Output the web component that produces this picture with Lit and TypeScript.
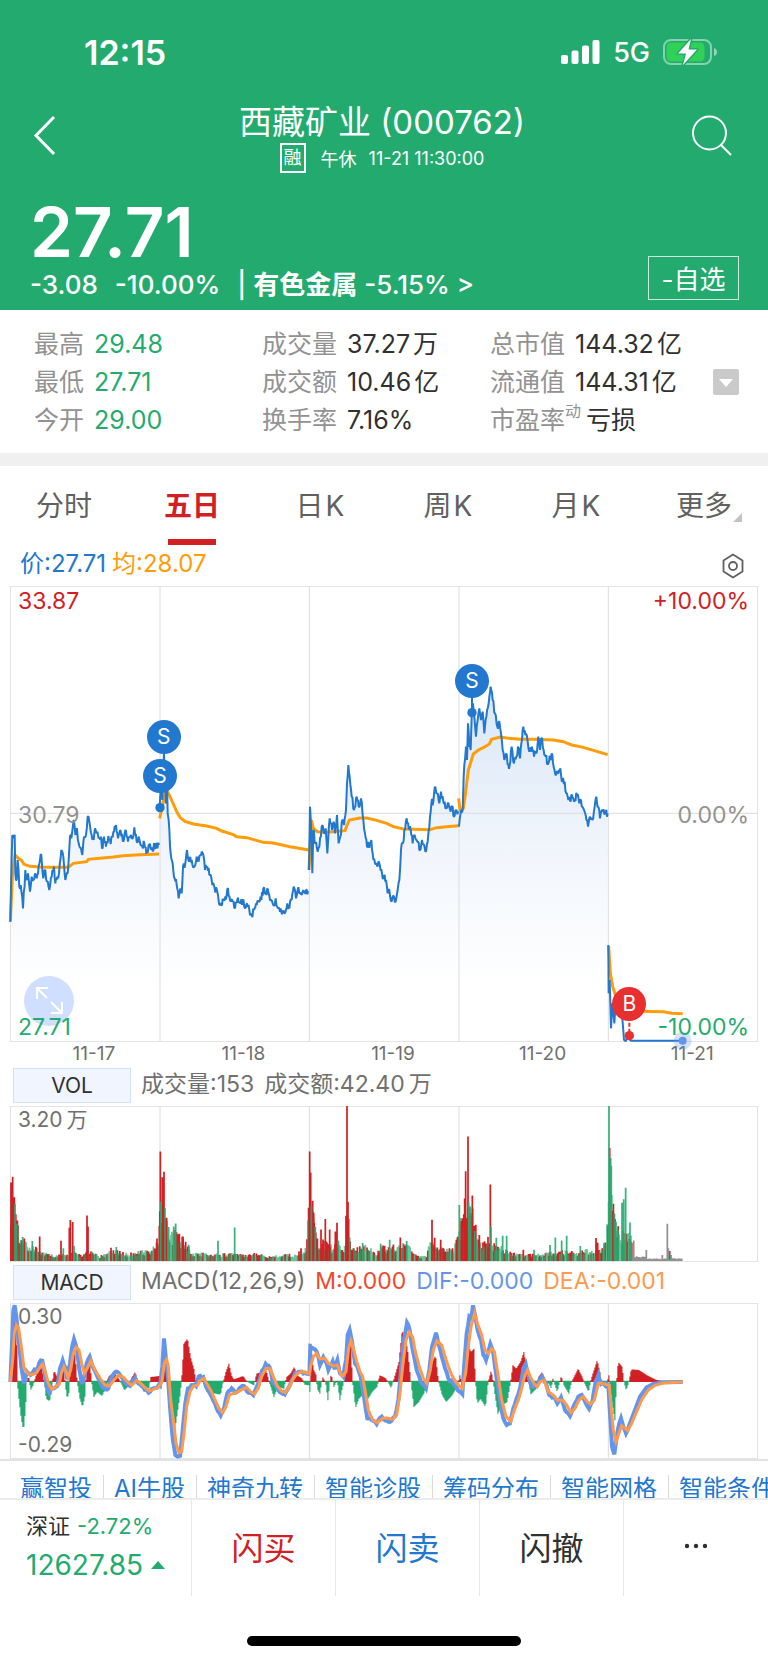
import { LitElement, html, svg, css } from "lit";
import { customElement, state } from "lit/decorators.js";
import { classMap } from "lit/directives/class-map.js";
import { styleMap } from "lit/directives/style-map.js";

type Point = [number, number];

const pts = (text: string): Point[] =>
  text.trim().split(/\s+/).map((p) => p.split(",").map(Number) as Point);

const seeded = (seed: number) => () => {
  seed = (seed * 1664525 + 1013904223) % 4294967296;
  return seed / 4294967296;
};

/** Adds tick-level movement between the key points of a series. */
const ticks = (line: Point[], step: number, amp: number, seed: number): Point[] => {
  const rnd = seeded(seed);
  const out: Point[] = [];
  for (let i = 0; i < line.length - 1; i++) {
    const [x0, y0] = line[i];
    const [x1, y1] = line[i + 1];
    out.push([x0, y0]);
    const n = Math.floor((x1 - x0) / step);
    if (n > 20) continue;
    for (let k = 1; k < n; k++) {
      const t = k / n;
      out.push([x0 + (x1 - x0) * t, y0 + (y1 - y0) * t + (rnd() - 0.5) * 2 * amp]);
    }
  }
  out.push(line[line.length - 1]);
  return out;
};

const at = (line: Point[], x: number): number => {
  for (let i = 1; i < line.length; i++) {
    const [x0, y0] = line[i - 1];
    const [x1, y1] = line[i];
    if (x <= x1) return y0 + ((y1 - y0) * (x - x0)) / (x1 - x0 || 1);
  }
  return line[line.length - 1][1];
};

const path = (line: Point[]) =>
  "M" + line.map(([x, y]) => `${x.toFixed(1)} ${y.toFixed(1)}`).join("L");

const PRICE = [
  "31,1025 35,830 37,765 44,765 46,880 50,900 53,840 58,920 62,915 69,985 76,870 80,900 84,880 90,935 95,890 100,900 105,880 110,895 120,840 124,825 130,895 136,870 141,905 148,930 155,890 162,860 166,910 172,890 177,880 184,810 190,830 196,900 203,880 210,770 216,760 221,720 226,765 231,745 236,790 247,825 253,770 258,765 263,710 268,725 275,765 281,780 285,745 292,755 296,775 303,770 306,805 312,770 318,800 325,768 332,792 340,755 348,735 354,775 362,752 370,785 376,750 384,785 393,765 398,775 403,742 410,785 418,778 427,800 433,790 441,815 448,795 456,802 464,800 470,793 477,795",
  "479,680 483,620 487,660 490,560 492,520 495,600 498,670 501,600 503,700 506,720 512,820 518,850 524,895 530,915 536,955 541,925 545,940 549,860 556,850 561,810 567,845 575,840 583,860 590,830 596,845 603,825 610,825 615,870 622,860 630,885 637,915 644,925 652,935 657,970 664,975 672,960 680,945 684,925 690,960 698,965 705,985 712,960 720,970 728,960 735,985 741,970 748,990 755,1005 762,990 770,975 777,965 784,960 790,925 797,935 804,930 812,960 820,975 827,955 834,985 842,985 848,995 855,1000 862,970 868,985 875,960 881,920 888,955 893,930 900,940 908,935 916,942 926,935",
  "927,870 930,680 934,760 937,880 940,750 946,790 953,815 958,800 965,740 971,755 977,745 982,820 989,715 996,750 1001,725 1005,760 1011,705 1016,790 1021,770 1027,720 1032,735 1038,690 1041,610 1045,555 1049,590 1055,650 1062,690 1070,650 1076,680 1083,655 1090,720 1095,760 1101,800 1110,790 1114,780 1118,820 1125,850 1132,860 1138,850 1146,880 1152,890 1158,900 1163,940 1168,930 1175,965 1182,950 1187,965 1193,930 1198,900 1203,810 1209,790 1213,750 1220,715 1226,745 1232,750 1238,790 1244,765 1252,785 1260,810 1266,780 1276,815 1283,785 1288,740 1294,670 1300,665 1306,620 1312,640 1318,670 1323,635 1330,665 1338,685 1343,670 1352,695 1358,680 1362,710 1368,690 1376,700",
  "1377,740 1382,700 1388,690 1391,590 1395,540 1398,500 1401,540 1404,430 1408,500 1412,510 1415,410 1419,370 1423,410 1428,470 1433,420 1438,385 1443,420 1448,395 1453,460 1459,410 1466,370 1472,320 1478,360 1485,400 1492,440 1498,425 1503,460 1508,510 1513,540 1518,520 1523,555 1529,555 1535,500 1542,550 1549,530 1554,500 1560,535 1566,480 1570,440 1576,465 1583,485 1588,515 1596,500 1602,530 1609,520 1615,470 1620,510 1624,475 1631,510 1637,530 1645,550 1655,520 1661,560 1669,580 1675,580 1681,565 1687,605 1694,605 1699,640 1705,660 1712,665 1716,645 1722,665 1731,645 1738,670 1743,660 1750,685 1757,705 1764,740 1770,710 1777,720 1784,680 1789,650 1795,680 1800,715 1808,695 1815,700 1823,700",
  "1825,1095 1826,1240 1829,1200 1833,1345 1837,1270 1843,1330 1848,1250 1855,1240 1862,1240 1866,1300 1872,1380 1877,1384 1882,1372 1893,1382 2048,1382",
].map((d, i) => ticks(pts(d), 2, i === 4 ? 2 : 12, 7 + i));

const AVERAGE = [
  "31,1025 38,870 45,825 55,835 65,842 72,853 90,859 120,861 150,862 205,862 220,850 260,845 265,838 300,835 340,831 370,827 420,824 477,822",
  "479,715 487,680 495,640 503,635 510,650 520,672 530,695 540,712 555,724 580,732 620,738 650,745 665,753 700,764 710,770 740,773 790,787 820,789 870,800 926,810",
  "927,870 934,720 940,745 952,755 980,757 1035,752 1040,738 1048,720 1080,714 1100,714 1130,721 1160,730 1180,740 1210,747 1240,748 1290,749 1310,743 1340,740 1376,737",
  "1376,655 1380,690 1390,685 1395,650 1400,610 1405,570 1413,545 1420,522 1435,510 1450,503 1468,492 1475,478 1500,471 1520,474 1560,478 1600,478 1660,480 1690,485 1715,495 1750,502 1823,524",
  "1826,1098 1831,1180 1838,1220 1848,1250 1880,1280 1920,1294 1990,1295 2015,1300 2048,1301",
].map(pts);

const VOLUME_BASE = pts(
  "31,200 45,150 55,100 62,62 75,66 85,48 110,38 130,25 160,18 205,20 230,30 250,16 265,34 300,16 320,20 340,38 370,25 400,25 440,32 465,45 478,60 480,180 500,120 520,88 545,72 560,50 575,27 610,24 640,22 700,22 730,20 780,25 800,12 850,20 880,20 920,38 927,190 940,160 950,62 975,58 990,46 1010,52 1030,36 1047,62 1060,36 1100,48 1130,22 1145,45 1180,45 1220,52 1255,16 1280,16 1290,58 1310,40 1350,36 1370,56 1377,115 1400,160 1415,170 1430,84 1450,56 1480,50 1510,42 1535,26 1570,20 1620,20 1660,28 1700,34 1730,26 1760,34 1800,34 1820,56 1825,280 1835,250 1845,130 1865,92 1890,88 1894,70",
);

/** x, height and colour of the tall bars. */
const VOLUME_PEAKS: [number, number, string][] = [
  [33, 236, "r"], [38, 253, "r"], [43, 192, "r"], [45, 172, "g"], [50, 112, "g"], [53, 108, "r"],
  [68, 72, "g"], [73, 68, "r"], [97, 60, "g"], [119, 74, "r"], [183, 61, "r"], [190, 38, "g"],
  [208, 100, "r"], [211, 123, "r"], [218, 117, "r"], [222, 46, "g"], [261, 137, "r"], [264, 104, "r"],
  [333, 40, "r"], [349, 42, "g"], [471, 68, "r"], [478, 105, "r"], [481, 329, "r"], [482, 178, "g"],
  [487, 252, "r"], [492, 268, "r"], [495, 160, "g"], [500, 130, "r"], [506, 102, "g"], [521, 104, "g"],
  [527, 113, "g"], [538, 82, "r"], [549, 74, "r"], [557, 58, "r"], [566, 49, "g"], [654, 61, "g"],
  [704, 101, "g"], [903, 38, "r"], [929, 329, "r"], [932, 265, "r"], [934, 165, "g"], [938, 181, "r"],
  [941, 145, "r"], [946, 103, "g"], [963, 95, "r"], [976, 126, "r"], [989, 95, "r"], [1006, 89, "r"],
  [1011, 115, "r"], [1015, 62, "g"], [1038, 136, "r"], [1041, 466, "r"], [1044, 178, "r"], [1046, 127, "r"],
  [1049, 71, "g"], [1088, 54, "g"], [1142, 52, "g"], [1169, 64, "g"], [1201, 71, "r"], [1220, 60, "g"],
  [1296, 124, "r"], [1304, 70, "r"], [1322, 64, "r"], [1369, 64, "r"], [1378, 168, "g"], [1384, 120, "r"],
  [1394, 188, "r"], [1397, 270, "r"], [1404, 374, "r"], [1406, 178, "g"], [1411, 164, "g"], [1417, 197, "r"],
  [1424, 90, "g"], [1438, 78, "r"], [1464, 72, "r"], [1471, 230, "r"], [1473, 103, "g"], [1489, 70, "g"],
  [1508, 76, "g"], [1520, 76, "g"], [1570, 34, "r"], [1602, 34, "g"], [1650, 48, "g"], [1666, 71, "g"],
  [1685, 62, "g"], [1700, 76, "g"], [1741, 45, "g"], [1788, 69, "r"], [1793, 55, "r"], [1812, 54, "g"],
  [1827, 466, "g"], [1829, 340, "r"], [1832, 310, "g"], [1834, 286, "g"], [1837, 150, "r"], [1843, 142, "g"],
  [1848, 118, "g"], [1854, 95, "g"], [1866, 175, "g"], [1871, 186, "g"], [1877, 220, "g"], [1880, 82, "r"],
  [1890, 116, "g"], [1893, 58, "g"], [1901, 62, "k"], [1939, 33, "k"], [1987, 18, "k"], [2002, 112, "k"],
  [2005, 38, "k"], [2009, 30, "r"], [2013, 18, "g"],
];

const VOLUME: [number, number, string][] = (() => {
  const rnd = seeded(42);
  const bars: [number, number, string][] = [];
  for (let x = 33; x < 1896; x += 2.4) {
    const rising = x < 62 || (x > 477 && x < 495) || (x > 925 && x < 945) || (x > 1370 && x < 1420);
    const c = rnd() < (rising ? 0.85 : x > 1825 ? 0.3 : 0.52) ? "r" : "g";
    bars.push([x, at(VOLUME_BASE, x) * (0.5 + rnd() * 0.6), c]);
  }
  for (let x = 1898; x < 2048; x += 3) bars.push([x, (x < 1940 ? 10 : 4) + rnd() * 4, "k"]);
  return bars;
})();

const HISTOGRAM = pts(
  "31,0 35,180 44,190 49,110 50,0 55,-50 62,-110 69,-145 75,-80 79,0 84,20 90,-25 98,-10 105,15 115,40 122,50 128,20 131,0 137,-50 147,-58 155,-20 158,25 162,32 170,15 178,20 185,65 190,50 194,-10 200,-50 206,-30 210,60 218,90 224,80 230,0 238,-50 246,-75 254,-40 257,30 268,65 273,0 280,-45 290,-30 305,-42 318,-10 323,15 340,30 355,10 360,0 372,-25 385,-10 392,10 404,30 412,0 430,-12 446,-20 450,15 478,18 485,25 492,125 497,60 500,0 506,-80 514,-180 522,-150 528,-110 540,-30 544,20 550,115 561,130 570,75 580,40 586,5 596,25 608,0 618,-30 660,-38 668,0 676,30 685,55 693,20 700,8 728,18 740,0 760,-10 768,25 785,30 797,35 806,0 820,-45 832,-15 850,-20 858,15 870,25 881,45 890,20 905,10 912,-8 926,-10 929,-40 931,115 938,40 947,20 950,-20 958,-35 966,15 975,0 982,-55 988,0 992,25 1000,-15 1010,5 1018,-55 1025,-20 1030,0 1036,30 1043,120 1050,130 1056,0 1065,-78 1075,-50 1085,-40 1100,-55 1115,-30 1130,-15 1137,20 1155,12 1172,-18 1182,15 1195,60 1205,155 1215,130 1222,90 1231,0 1240,-75 1255,-60 1270,-35 1282,0 1290,50 1305,80 1314,0 1325,-40 1337,-60 1355,-40 1372,-10 1378,20 1386,-10 1390,60 1398,140 1407,100 1412,90 1420,100 1425,0 1430,-65 1440,-50 1455,-75 1463,0 1472,35 1478,0 1485,-50 1492,-95 1505,-70 1520,-60 1530,0 1537,50 1547,40 1560,60 1570,90 1580,35 1585,0 1590,-38 1608,-20 1614,15 1625,30 1635,0 1645,-5 1652,-20 1657,10 1670,-30 1682,18 1690,-10 1705,-35 1713,0 1733,40 1745,15 1755,-10 1764,-30 1772,10 1790,65 1798,30 1803,-5 1820,0 1825,20 1828,-20 1843,-115 1848,0 1853,60 1865,45 1870,0 1877,-25 1885,0 1892,38 1915,36 1940,20 1965,7 1990,2 2048,1",
);

const DIF = pts(
  "31,366 36,250 40,150 44,136 49,170 56,240 64,320 72,370 80,335 92,345 104,328 112,330 118,308 127,302 133,330 140,375 148,398 158,385 172,378 180,325 188,302 196,322 202,358 210,310 216,262 222,238 230,265 238,330 246,372 254,345 260,310 269,290 277,318 290,345 300,365 312,385 325,385 335,350 348,335 360,345 375,368 390,378 405,354 415,370 430,382 446,398 460,385 480,378 487,320 492,235 498,300 503,340 510,440 518,535 526,585 533,590 540,588 548,510 556,430 564,385 575,375 588,378 596,350 610,352 618,380 635,410 650,445 662,466 672,445 682,400 695,385 706,398 722,382 732,378 745,398 760,405 775,370 786,332 797,312 810,325 818,365 835,390 855,402 870,375 885,340 900,335 915,338 928,342 931,260 945,268 955,290 960,315 970,292 980,310 985,330 998,305 1004,328 1012,300 1020,340 1030,350 1038,300 1043,225 1049,210 1056,245 1065,310 1072,320 1082,350 1092,410 1102,475 1115,480 1130,492 1145,470 1160,482 1175,482 1185,470 1195,420 1203,330 1211,240 1221,188 1229,210 1238,270 1250,330 1262,365 1278,384 1288,330 1296,260 1308,218 1318,260 1330,305 1345,355 1365,378 1387,402 1393,310 1400,220 1408,170 1414,175 1419,136 1425,165 1433,210 1443,240 1450,285 1458,300 1465,275 1471,252 1480,280 1490,355 1500,420 1510,475 1520,495 1530,490 1540,445 1550,415 1560,385 1570,325 1577,312 1585,345 1595,380 1610,378 1618,360 1626,350 1638,370 1648,405 1665,415 1672,430 1683,412 1695,450 1710,468 1720,440 1735,410 1745,405 1755,425 1767,446 1777,425 1787,365 1795,345 1803,372 1825,376 1830,460 1836,560 1843,583 1850,530 1858,490 1863,475 1870,500 1878,520 1888,495",
);

const DIF_TAIL = pts("1888,495 1905,450 1920,410 1940,382 1960,372 1990,367 2048,366");

const DEA = pts(
  "31,366 38,300 43,220 49,195 56,205 64,260 72,325 82,340 95,344 108,340 120,322 128,312 136,335 145,370 155,388 165,382 178,372 184,340 192,320 198,335 204,352 212,330 220,280 229,262 237,270 245,310 253,340 262,325 272,302 280,320 290,338 302,358 315,375 328,378 342,360 355,345 370,352 385,368 395,376 410,362 420,368 432,380 447,393 460,388 475,382 486,366 493,310 500,298 505,320 512,420 520,480 528,550 537,578 545,575 553,510 560,440 570,395 580,378 592,376 600,362 612,355 620,370 632,390 645,420 657,445 668,458 678,440 688,405 700,400 715,395 727,388 740,382 752,395 763,402 775,385 785,350 798,325 810,326 820,350 832,378 845,393 856,398 868,380 880,355 893,340 905,335 918,338 928,342 932,320 940,290 950,280 960,297 975,295 985,310 1000,318 1012,315 1022,342 1028,348 1038,335 1046,265 1053,242 1060,265 1070,305 1080,335 1088,350 1095,390 1105,450 1118,480 1132,488 1150,474 1160,474 1178,478 1190,465 1200,400 1208,320 1218,240 1228,216 1238,232 1246,275 1258,320 1270,355 1280,370 1290,335 1300,270 1311,243 1325,255 1340,305 1355,345 1370,370 1387,386 1397,340 1405,260 1413,200 1424,160 1432,190 1445,225 1455,270 1465,280 1475,266 1483,275 1495,350 1505,420 1518,470 1532,484 1545,445 1555,420 1565,385 1575,345 1583,330 1593,355 1605,375 1612,380 1620,366 1632,360 1645,395 1660,405 1672,420 1690,422 1700,435 1713,458 1725,445 1737,420 1750,410 1762,425 1771,432 1783,420 1795,370 1805,370 1828,376 1833,440 1840,510 1848,545 1855,525 1865,497 1875,505 1883,512 1895,490 1910,455 1925,420 1945,390 1965,376 1990,369 2048,366",
);

const histogramBars = (sign: 1 | -1) => {
  let d = "";
  for (let x = 31; x < 2048; x += 3) {
    const v = at(HISTOGRAM, x);
    if (v * sign > 0.5) d += `M${x} 366h3.4V${(366 - v).toFixed(1)}h-3.4z`;
  }
  return d;
};

const volumeBars = (color: string, only: [number, number, string][]) =>
  only.filter((b) => b[2] === color)
    .map(([x, h]) => `M${(x - 2.6).toFixed(1)} 634v${(-h).toFixed(1)}h5.2V634z`)
    .join("");

const DAYS = ["11-17", "11-18", "11-19", "11-20", "11-21"];

const MARKS = [
  { side: "S", x: 491, y: 471 },
  { side: "S", x: 480, y: 588 },
  { side: "S", x: 1416, y: 303 },
  { side: "B", x: 1888, y: 1272 },
];

const STATS = [
  [["最高", "29.48"], ["最低", "27.71"], ["今开", "29.00"]],
  [["成交量", "37.27万"], ["成交额", "10.46亿"], ["换手率", "7.16%"]],
  [["总市值", "144.32亿"], ["流通值", "144.31亿"], ["市盈率", "亏损", "动"]],
];

const TABS = ["分时", "五日", "日K", "周K", "月K", "更多"];
const TOOLS = ["赢智投", "AI牛股", "神奇九转", "智能诊股", "筹码分布", "智能网格", "智能条件单"];

const spaced = (value: string) => {
  const m = /^([\d.]+)([万亿])$/.exec(value);
  return m ? html`${m[1]}<span class="unit">${m[2]}</span>` : value;
};

const shared = css`
  * { box-sizing: border-box; }
  button {
    font: inherit;
    color: inherit;
    background: none;
    border: 0;
    padding: 0;
    margin: 0;
    cursor: pointer;
  }
  a { color: inherit; text-decoration: none; }
  svg { display: block; }
`;

@customElement("quote-header")
class QuoteHeader extends LitElement {
  static styles = [shared, css`
    :host {
      display: block;
      background: #23ab6f;
      color: #fff;
      padding-top: 36px;
    }
    .status {
      display: flex;
      align-items: center;
      justify-content: space-between;
      height: 32px;
      padding: 0 50px 0 84px;
    }
    .clock { font-size: 34px; font-weight: 600; }
    .radio { display: flex; align-items: center; gap: 13px; font-size: 27px; font-weight: 500; }
    .nav {
      display: grid;
      grid-template-columns: 40px 1fr 40px;
      align-items: center;
      margin-top: 34px;
      padding: 0 36px 0 32px;
    }
    .nav button { padding-bottom: 4px; }
    .name {
      margin: 0;
      text-align: center;
      font-size: 33px;
      line-height: 40px;
      font-weight: 400;
      white-space: nowrap;
    }
    .session {
      display: flex;
      align-items: center;
      justify-content: center;
      height: 32px;
      font-size: 18px;
    }
    .margin-flag {
      border: 2px solid #fff;
      font-size: 18px;
      line-height: 26px;
      width: 26px;
      display: flex;
      justify-content: center;
      margin-right: 15px;
    }
    .session time { margin-left: 12px; }
    .quote {
      display: flex;
      justify-content: space-between;
      align-items: flex-end;
      margin-top: 22px;
      padding: 0 29px 8px 30px;
    }
    .price { font-size: 69px; line-height: 72px; font-weight: 600; }
    .change {
      display: flex;
      font-size: 26px;
      line-height: 34px;
      font-weight: 500;
      white-space: nowrap;
    }
    .change .percent { margin: 0 17px; }
    .sector b { font-weight: 700; }
    .watch {
      border: 1px solid #c8ebdb;
      height: 44px;
      width: 91px;
      margin-bottom: 2px;
      padding-bottom: 2px;
      font-size: 26px;
      white-space: nowrap;
    }
  `];

  render() {
    return html`
      <div class="status">
        <span class="clock">12:15</span>
        <span class="radio">
          <svg width="39" height="24" viewBox="0 0 39 24" fill="#fff" aria-hidden="true">
            <rect x="0" y="15" width="7" height="9" rx="2" /><rect x="10.500" y="10.500" width="7" height="13.500" rx="2" />
            <rect x="21" y="5.500" width="7" height="18.500" rx="2" /><rect x="31.500" y="0" width="7" height="24" rx="2" />
          </svg>
          <span>5G</span>
          <svg width="55" height="28" viewBox="0 0 55 28" aria-hidden="true">
            <rect x="1" y="2" width="47" height="24" rx="7" fill="none" stroke="#fff" stroke-opacity=".45" stroke-width="2" />
            <path d="M51 10q3 1 3 4t-3 4z" fill="#fff" fill-opacity=".5" />
            <rect x="3.500" y="4.500" width="38" height="19" rx="4.500" fill="#31d158" />
            <path d="M28 1L15 15.500h8L20 27l14-15.500h-8.500z" fill="#fff" stroke="#23ab6f" stroke-width="3" paint-order="stroke" stroke-linejoin="round" />
          </svg>
        </span>
      </div>
      <div class="nav">
        <button aria-label="返回">
          <svg width="26" height="42" viewBox="0 0 26 42" fill="none" stroke="#fff" stroke-width="3"><path d="M22 2L4 20.500 22 39" /></svg>
        </button>
        <div>
          <h1 class="name">西藏矿业 (000762)</h1>
          <div class="session"><span class="margin-flag">融</span><span>午休</span><time>11-21 11:30:00</time></div>
        </div>
        <button aria-label="搜索">
          <svg width="40" height="42" viewBox="0 0 40 42" fill="none" stroke="#fff" stroke-width="2"><circle cx="17.500" cy="18" r="16.500" /><path d="M29 30L39 40" /></svg>
        </button>
      </div>
      <div class="quote">
        <div>
          <div class="price">27.71</div>
          <div class="change">
            <span>-3.08</span><span class="percent">-10.00%</span>
            <a class="sector" href="#sector">| <b>有色金属</b> -5.15% &gt;</a>
          </div>
        </div>
        <button class="watch">-自选</button>
      </div>
    `;
  }
}

@customElement("quote-stats")
class QuoteStats extends LitElement {
  static styles = [shared, css`
    :host {
      display: grid;
      grid-template-columns: 228fr 228fr 223fr 55fr;
      align-items: center;
      padding: 15px 0 14px 34px;
      border-bottom: 13px solid #f0f0f0;
      font-size: 25px;
      line-height: 38px;
      color: #303030;
    }
    dl { margin: 0; }
    .row { display: flex; gap: 10px; white-space: nowrap; }
    dt { color: #929292; display: flex; }
    dd { margin: 0; }
    .down { color: #23ab6f; }
    .unit { margin-left: 3px; }
    .note { font-size: 16px; line-height: 20px; margin-right: -5px; }
    .more { width: 26px; height: 26px; background: #cacaca; border-radius: 2px; }
  `];

  render() {
    return html`
      ${STATS.map((col, i) => html`
        <dl>${col.map(([label, value, note]) => html`
          <div class="row">
            <dt>${label}${note ? html`<span class="note">${note}</span>` : ""}</dt>
            <dd class=${classMap({ down: i === 0 })}>${spaced(value)}</dd>
          </div>`)}
        </dl>`)}
      <button class="more" aria-label="展开更多">
        <svg width="26" height="26" viewBox="0 0 26 26"><path d="M6 10h14l-7 8z" fill="#fff" /></svg>
      </button>
    `;
  }
}

@customElement("period-tabs")
class PeriodTabs extends LitElement {
  @state() private active = 1;

  static styles = [shared, css`
    :host { display: grid; grid-template-columns: repeat(6, 1fr); }
    .tab {
      position: relative;
      height: 80px;
      font-size: 28px;
      line-height: 80px;
      color: #606060;
    }
    .latin { margin-left: 2px; }
    .active { color: #d12024; font-weight: 700; }
    .active::after {
      content: "";
      position: absolute;
      left: 50%;
      bottom: 1px;
      width: 48px;
      height: 6px;
      margin-left: -24px;
      background: #d12024;
    }
    .corner {
      position: absolute;
      right: 26px;
      bottom: 24px;
      border-left: 9px solid transparent;
      border-bottom: 9px solid #c4c4c4;
    }
  `];

  render() {
    return TABS.map((tab, i) => html`
      <button class=${classMap({ tab: true, active: i === this.active })} @click=${() => (this.active = i)}>
        ${tab.endsWith("K") ? html`${tab[0]}<span class="latin">K</span>` : tab}
        ${i === 5 ? html`<span class="corner"></span>` : ""}
      </button>`);
  }
}

@customElement("quote-charts")
class QuoteCharts extends LitElement {
  static styles = [shared, css`
    :host { display: block; padding: 0 10px; color: #707070; font-size: 23px; }
    .legend {
      display: flex;
      align-items: center;
      gap: 6px;
      height: 40px;
      padding: 0 13px 0 10px;
      font-size: 24px;
      line-height: 32px;
      color: #2277cf;
    }
    .legend span { padding-bottom: 4px; }
    .avg { color: #ff9c08; }
    .legend button { margin-left: auto; }
    .chart { position: relative; border: 1px solid #e4e4e4; }
    .chart svg { width: 100%; height: 100%; overflow: visible; }
    .main { height: 456px; }
    .sub { height: 156px; }
    .grid { stroke: #dcdcdc; stroke-width: 1; }
    .grid, .line { fill: none; vector-effect: non-scaling-stroke; }
    .price-line { stroke: #2277cf; stroke-width: 2; stroke-linejoin: bevel; }
    .avg-line { stroke: #ff9c08; stroke-width: 3; }
    .dif { stroke: #6495ed; stroke-width: 4; }
    .dea { stroke: #ff994d; stroke-width: 3; }
    .label { position: absolute; left: 7px; line-height: 28px; }
    .small { font-size: 21px; line-height: 26px; }
    .end { left: auto; right: 8px; }
    .top { top: 0; }
    .middle { top: 50%; margin-top: -13px; color: #929292; }
    .bottom { bottom: 0; }
    .up { color: #d12024; }
    .down { color: #23ab6f; }
    .mark {
      position: absolute;
      width: 34px;
      height: 34px;
      margin: -17px 0 0 -17px;
      border-radius: 50%;
      background: #2277cf;
      color: #fff;
      font-size: 21px;
      line-height: 34px;
      text-align: center;
    }
    .buy { background: #e83030; }
    .expand {
      position: absolute;
      left: 13px;
      bottom: 15px;
      width: 50px;
      height: 50px;
      border-radius: 50%;
      background: #d0deff;
    }
    .dates {
      display: grid;
      grid-template-columns: repeat(5, 1fr);
      padding-left: 9px;
      margin-right: -9px;
      font-size: 19px;
      line-height: 23px;
      text-align: center;
    }
    .indicator {
      display: flex;
      align-items: center;
      gap: 10px;
      height: 41px;
      padding-left: 3px;
      line-height: 32px;
      white-space: nowrap;
    }
    .indicator > span { padding-bottom: 3px; }
    .indicator button {
      width: 118px;
      height: 35px;
      border: 1px solid #d3e1fb;
      background: #f0f5ff;
      color: #303030;
      font-size: 21px;
    }
    .unit { margin-left: 4px; }
    .m { color: #f04a2c; }
    .dif-text { color: #6495ed; }
    .dea-text { color: #ff994d; }
  `];

  private verticals(top: number, bottom: number) {
    return svg`<path class="grid" d=${[480, 928, 1377, 1825].map((x) => `M${x} ${top}V${bottom}`).join("")} />`;
  }

  render() {
    return html`
      <div class="legend">
        <span>价:27.71</span><span class="avg">均:28.07</span>
        <button aria-label="图表设置">
          <svg width="24" height="26" viewBox="0 0 24 26" fill="none" stroke="#606060" stroke-width="1.800"><path d="M12 1.500L21.500 7.500v11L12 24.500 2.500 18.500v-11z" stroke-linejoin="round" /><circle cx="12" cy="13" r="4" /></svg>
        </button>
      </div>

      <div class="chart main">
        <svg viewBox="33 21 2238 1362" preserveAspectRatio="none" aria-label="五日走势">
          <defs>
            <linearGradient id="fill" gradientUnits="userSpaceOnUse" x1="0" y1="300" x2="0" y2="1385">
              <stop offset="0" stop-color="#2277cf" stop-opacity=".18" />
              <stop offset=".5" stop-color="#2e6fcf" stop-opacity=".06" />
              <stop offset=".85" stop-color="#2277cf" stop-opacity="0" />
            </linearGradient>
          </defs>
          ${PRICE.map((p) => svg`<path fill="url(#fill)" d=${`${path(p)}V1383H${p[0][0]}z`} />`)}
          <path class="grid" d="M33 700H2271" />
          ${this.verticals(21, 1383)}
          ${AVERAGE.map((p) => svg`<path class="line avg-line" d=${path(p)} />`)}
          ${PRICE.map((p) => svg`<path class="line price-line" d=${path(p)} />`)}
          <path class="line price-line" d="M1416 340V398" />
          <path class="line" stroke="#e83030" stroke-width="2" stroke-dasharray="4 2" d="M1888 1310V1367" />
          <circle cx="480" cy="683" r="14" fill="#2277cf" />
          <circle cx="1416" cy="398" r="14" fill="#2277cf" />
          <circle cx="1888" cy="1367" r="14" fill="#e83030" />
          <circle cx="2048" cy="1382" r="27" fill="#6495ed" fill-opacity=".28" />
          <circle cx="2048" cy="1382" r="12" fill="#6495ed" />
        </svg>
        <button class="expand" aria-label="全屏">
          <svg viewBox="0 0 50 50" fill="none" stroke="#fff" stroke-width="2"><path d="M13 23V12H24M13 12L23 22M38 26V37H27M38 37L27 26" /></svg>
        </button>
        <span class="label top up">33.87</span><span class="label top end up">+10.00%</span>
        <span class="label middle">30.79</span><span class="label middle end">0.00%</span>
        <span class="label bottom down">27.71</span><span class="label bottom end down">-10.00%</span>
        ${MARKS.map((m) => html`
          <span class=${classMap({ mark: true, buy: m.side === "B" })}
            style=${styleMap({ left: `${((m.x - 33) / 2238) * 100}%`, top: `${((m.y - 21) / 1362) * 100}%` })}>${m.side}</span>`)}
      </div>
      <div class="dates">${DAYS.map((d) => html`<span>${d}</span>`)}</div>

      <div class="indicator">
        <button>VOL</button><span>成交量:153</span><span>成交额:42.40<span class="unit">万</span></span>
      </div>
      <div class="chart sub">
        <svg viewBox="33 171 2238 463" preserveAspectRatio="none" aria-label="成交量">
          ${this.verticals(171, 634)}
          <path fill="#d12024" d=${volumeBars("r", VOLUME)} />
          <path fill="#23ab6f" fill-opacity=".7" d=${volumeBars("g", VOLUME)} />
          <path fill="#d12024" d=${volumeBars("r", VOLUME_PEAKS)} />
          <path fill="#23ab6f" fill-opacity=".9" d=${volumeBars("g", VOLUME_PEAKS)} />
          <path fill="#909090" d=${volumeBars("k", [...VOLUME, ...VOLUME_PEAKS])} />
        </svg>
        <span class="label small top">3.20<span class="unit">万</span></span>
      </div>

      <div class="indicator">
        <button>MACD</button><span>MACD(12,26,9)</span><span class="m">M:0.000</span><span class="dif-text">DIF:-0.000</span><span class="dea-text">DEA:-0.001</span>
      </div>
      <div class="chart sub">
        <svg viewBox="33 132 2238 462" preserveAspectRatio="none" aria-label="MACD">
          ${this.verticals(132, 594)}
          <path stroke="#23ab6f" stroke-width="4" d="M33 364H2048" />
          <path fill="#d12024" d=${histogramBars(1)} />
          <path fill="#23ab6f" d=${histogramBars(-1)} />
          <path class="line dif" d=${path([...ticks(DIF, 4, 4, 3), ...DIF_TAIL])} />
          <path class="line dea" d=${path(DEA)} />
        </svg>
        <span class="label small top">0.30</span>
        <span class="label small bottom">-0.29</span>
      </div>
    `;
  }
}

@customElement("trade-dock")
class TradeDock extends LitElement {
  static styles = [shared, css`
    :host { display: block; border-top: 2px solid #e2e2e2; }
    .tools {
      display: flex;
      height: 39px;
      padding: 14px 0 0 10px;
      overflow: hidden;
      border-bottom: 2px solid #ececec;
      font-size: 24px;
      line-height: 28px;
      color: #2277cf;
      white-space: nowrap;
    }
    .tools a { flex: none; padding: 0 11px 0 10px; border-right: 1px solid #dadada; }
    .bar { display: grid; grid-template-columns: 192px repeat(4, 1fr); height: 96px; }
    .bar > * { border-right: 1px solid #e8e8e8; }
    .bar > :last-child { border-right: 0; }
    .index { padding: 8px 0 0 26px; color: #23ab6f; white-space: nowrap; }
    .index-top { display: flex; gap: 7px; font-size: 22px; line-height: 36px; }
    .index-name { color: #303030; }
    .index-value { display: flex; align-items: center; gap: 8px; font-size: 28px; line-height: 42px; }
    .trade { font-size: 32px; padding-bottom: 5px; color: #303030; }
    .buy { color: #d12024; }
    .sell { color: #2277cf; }
    .trade svg { margin: auto; }
    .home { width: 274px; height: 10px; border-radius: 5px; background: #000; margin: 40px auto 16px; }
  `];

  render() {
    return html`
      <nav class="tools">${TOOLS.map((t) => html`<a href="#tool">${t}</a>`)}</nav>
      <div class="bar">
        <a class="index" href="#index">
          <span class="index-top"><span class="index-name">深证</span><span>-2.72%</span></span>
          <span class="index-value">12627.85
            <svg width="14" height="8" viewBox="0 0 14 8" fill="#23ab6f"><path d="M7 0l7 8H0z" /></svg>
          </span>
        </a>
        <button class="trade buy">闪买</button>
        <button class="trade sell">闪卖</button>
        <button class="trade">闪撤</button>
        <button class="trade" aria-label="更多">
          <svg width="24" height="6" viewBox="0 0 24 6" fill="#303030"><circle cx="3" cy="3" r="2.200" /><circle cx="12" cy="3" r="2.200" /><circle cx="21" cy="3" r="2.200" /></svg>
        </button>
      </div>
      <div class="home"></div>
    `;
  }
}

@customElement("app-root")
class AppRoot extends LitElement {
  static styles = css`
    :host {
      display: block;
      background: #fff;
      font-family: Inter, "Noto Sans CJK SC", sans-serif;
      overflow: hidden;
    }
  `;

  render() {
    return html`
      <quote-header></quote-header>
      <quote-stats></quote-stats>
      <period-tabs></period-tabs>
      <quote-charts></quote-charts>
      <trade-dock></trade-dock>
    `;
  }
}
